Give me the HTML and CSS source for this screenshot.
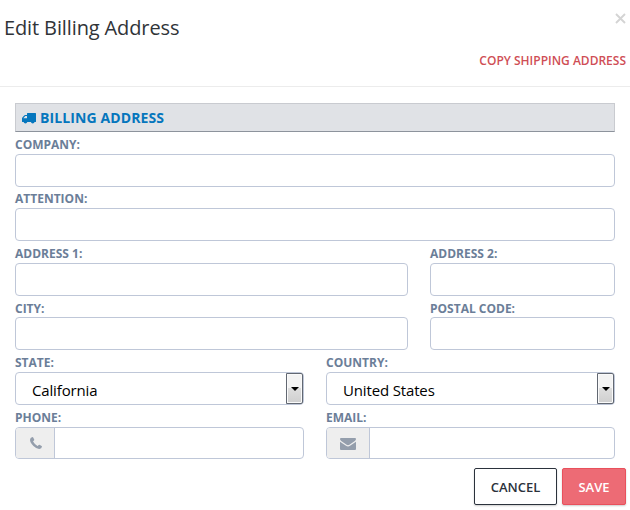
FILE: index.html
```html
<!DOCTYPE html>
<html lang="en">
<head>
<meta charset="utf-8">
<title>Edit Billing Address</title>
<link rel="stylesheet" href="styles.css">
</head>
<body>
<header class="modal-header">
  <h1 class="title">Edit Billing Address</h1>
  <button class="close" aria-label="Close"><svg width="11" height="11" viewBox="0 0 11 11"><path d="M1 1l9 9M10 1l-9 9" fill="none" stroke="#d4d4d4" stroke-width="1.9"/></svg></button>
  <a class="copy">COPY SHIPPING ADDRESS</a>
</header>
<main class="form">
  <h2 class="section"><svg class="truck" width="14" height="11" viewBox="0 0 14 11"><path fill="currentColor" fill-rule="evenodd" d="M5.6 0H13.4Q14 0 14 .6V8.400Q14 9 13.4 9H12.6A1.900 1.900 0 0 1 8.900 9H5.300A1.900 1.900 0 0 1 1.600 9H.7Q0 9 0 8.400V5.3Q0 4.800 .4 4.400L2.2 2.4Q2.6 1.900 3.2 1.900H5V.6Q5 0 5.6 0ZM3.3 3L1.3 5.200H5V3Z"/></svg>BILLING ADDRESS</h2>
  <div class="rows">
    <div class="row"><label class="field"><span class="label">COMPANY:</span><input class="control"></label></div>
    <div class="row raised"><label class="field"><span class="label">ATTENTION:</span><input class="control"></label></div>
    <div class="row wide-narrow">
      <label class="field"><span class="label">ADDRESS 1:</span><input class="control"></label>
      <label class="field"><span class="label">ADDRESS 2:</span><input class="control"></label>
    </div>
    <div class="row wide-narrow">
      <label class="field"><span class="label">CITY:</span><input class="control"></label>
      <label class="field"><span class="label">POSTAL CODE:</span><input class="control"></label>
    </div>
    <div class="row halves">
      <div class="field"><span class="label">STATE:</span><div class="control select"><span class="value">California</span><span class="drop"><svg width="8" height="4" viewBox="0 0 8 4"><path d="M0 0h8L4 4z"/></svg></span></div></div>
      <div class="field"><span class="label">COUNTRY:</span><div class="control select"><span class="value">United States</span><span class="drop"><svg width="8" height="4" viewBox="0 0 8 4"><path d="M0 0h8L4 4z"/></svg></span></div></div>
    </div>
    <div class="row halves">
      <label class="field"><span class="label">PHONE:</span><span class="control group"><span class="addon phone"><svg width="12" height="12" viewBox="0 0 12 12"><path fill="#949eac" d="M2.4 0Q3 0 3.2.5L4.2 2.5Q4.4 3 4 3.4Q3 4.1 3.1 4.5Q4.8 7.6 7.5 8.9Q7.9 9 8.6 8Q9 7.6 9.5 7.8L11.6 8.9Q12 9.1 12 9.6Q11.7 11.8 9.4 12Q6.7 12.1 3.4 9Q0 5.500 0 2.700Q.1.500 2.400 0Z"/></svg></span><input class="bare"></span></label>
      <label class="field"><span class="label">EMAIL:</span><span class="control group"><span class="addon email"><svg width="16" height="12" viewBox="0 0 16 12"><path fill="#949eac" d="M1 0H15Q16 0 16 1Q16 2.200 14.800 3L9.400 6.700Q8 7.600 6.600 6.700L1.200 3Q0 2.200 0 1Q0 0 1 0ZM0 3.700L6 7.800Q8 9.100 10 7.800L16 3.700V11Q16 12 15 12H1Q0 12 0 11Z"/></svg></span><input class="bare"></span></label>
    </div>
  </div>
</main>
<footer class="actions">
  <button class="btn cancel">CANCEL</button>
  <button class="btn save">SAVE</button>
</footer>
</body>
</html>
```
FILE: styles.css
```css
* { box-sizing: border-box; }
body {
  margin: 0;
  height: 510px;
  overflow: hidden;
  background: #fff;
  font-family: "Open Sans", sans-serif;
}
.modal-header {
  display: grid;
  grid-template-columns: 1fr auto;
  grid-template-rows: 47px 39px;
  height: 87px;
  padding: 0 4px;
  border-bottom: 1px solid #ececec;
}
.title {
  margin: 0;
  padding-top: 14px;
  font-size: 20px;
  line-height: 28px;
  font-weight: 400;
  letter-spacing: -0.12px;
  color: #303438;
}
.close {
  padding: 13px 0 0;
  border: 0;
  background: none;
  align-self: start;
  justify-self: end;
  line-height: 0;
}
.copy {
  grid-column: 1 / -1;
  justify-self: end;
  padding-top: 4px;
  font-size: 12px;
  line-height: 20px;
  font-weight: 600;
  color: #cf4e55;
}
.form { padding: 16px 15px 0; }
.section {
  display: flex;
  align-items: center;
  gap: 4px;
  margin: 0;
  height: 29px;
  padding: 0 6px;
  border: 1px solid #c9cbd0;
  border-bottom-color: #8d939c;
  background: #e0e2e6;
  color: #0576bd;
  font-size: 14px;
  line-height: 20px;
  font-weight: 700;
  letter-spacing: 0.1px;
}
.truck { margin-top: 2px; }
.rows {
  display: grid;
  grid-template-rows: 55px 54px 55px 54px 55px 54px;
}
.row { display: grid; }
.wide-narrow { grid-template-columns: 393px 185px; column-gap: 22px; }
.halves { grid-template-columns: 289px 289px; column-gap: 22px; }
.field { display: flex; flex-direction: column; min-width: 0; }
.label {
  flex: 1;
  padding-top: 4px;
  font-size: 12px;
  line-height: 17px;
  font-weight: 700;
  color: #6b7e98;
}
.raised .label { padding-top: 3px; }
.control {
  width: 100%;
  height: 33px;
  flex: none;
  border: 1px solid #bfc7d8;
  border-radius: 4px;
  background: #fff;
}
.select { display: flex; padding-left: 16px; }
.value {
  flex: 1;
  padding-top: 3px;
  font-size: 15px;
  line-height: 29px;
  letter-spacing: -0.15px;
  color: #000;
}
.drop {
  display: flex;
  align-items: center;
  justify-content: center;
  width: 17px;
  height: 31px;
  border: 1px solid #626872;
  border-radius: 0 2px 2px 0;
  background: linear-gradient(#f3f3f3 0 50%, #dedede 50%, #cfcfcf);
  box-shadow: inset 0 0 0 1px #fafafa;
}
.group { display: flex; height: 32px; overflow: hidden; }
.addon {
  display: flex;
  align-items: center;
  justify-content: center;
  border-right: 1px solid #bfc7d8;
  background: #eee;
}
.phone { width: 39px; padding-left: 1px; }
.email { width: 43px; padding-top: 1px; }
.bare { flex: 1; min-width: 0; border: 0; background: none; }
.actions {
  display: flex;
  justify-content: flex-end;
  gap: 5px;
  padding: 9px 4px 0;
}
.btn {
  height: 37px;
  padding: 1px 0 0;
  border: 1px solid;
  border-radius: 2px;
  font: 600 13px/18px "Open Sans", sans-serif;
  box-shadow: 0 1px 2px rgba(0, 0, 0, .2);
}
.cancel { width: 83px; background: #fff; border-color: #2b323c; color: #2b323c; }
.save { width: 64px; background: #ed6b75; border-color: #e9505c; color: #fff; }
```
